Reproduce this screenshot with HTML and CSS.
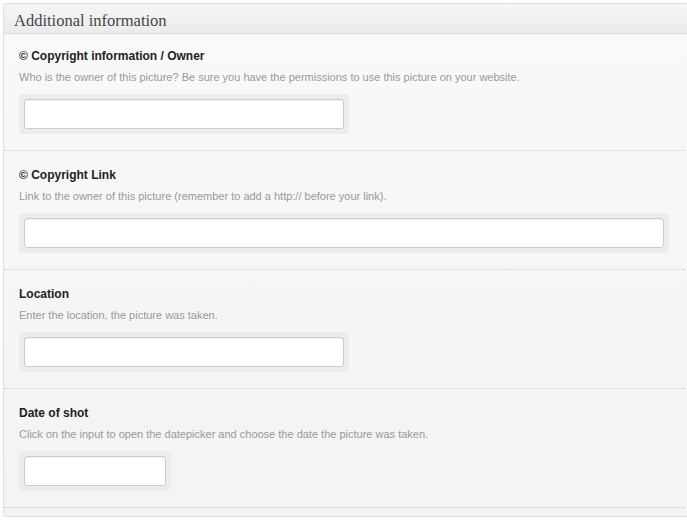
FILE: index.html
```html
<!DOCTYPE html>
<html>
<head>
<meta charset="utf-8">
<link rel="stylesheet" href="styles.css">
</head>
<body>
<div class="postbox">
  <h3 class="hndle">Additional information</h3>
  <div class="inside">
    <div class="field first">
      <label class="label">© Copyright information / Owner</label>
      <p class="desc">Who is the owner of this picture? Be sure you have the permissions to use this picture on your website.</p>
      <div class="wrap w-medium"><input class="input" type="text"></div>
    </div>
    <div class="field">
      <label class="label">© Copyright Link</label>
      <p class="desc">Link to the owner of this picture (remember to add a http:// before your link).</p>
      <div class="wrap w-large"><input class="input" type="text"></div>
    </div>
    <div class="field">
      <label class="label">Location</label>
      <p class="desc">Enter the location, the picture was taken.</p>
      <div class="wrap w-medium"><input class="input" type="text"></div>
    </div>
    <div class="field">
      <label class="label">Date of shot</label>
      <p class="desc">Click on the input to open the datepicker and choose the date the picture was taken.</p>
      <div class="wrap w-small"><input class="input" type="text"></div>
    </div>
  </div>
</div>
</body>
</html>
```
FILE: styles.css
```css
html, body {
  margin: 0;
  padding: 0;
  background: #ffffff;
  overflow: hidden;
}
body {
  padding: 3px 0 0 3px;
  font-family: "Liberation Sans", Arial, sans-serif;
}
.postbox {
  width: 700px;
  border: 1px solid #dfdfdf;
  border-radius: 3px;
  background: linear-gradient(to bottom, #f9f9f9, #f3f3f3);
  padding-bottom: 8px;
}
.hndle {
  margin: 0;
  height: 29px;
  line-height: 33px;
  padding: 0 0 0 10px;
  font-family: "Liberation Serif", Georgia, serif;
  font-weight: normal;
  font-size: 16.5px;
  color: #464646;
  background: linear-gradient(to bottom, #f6f6f6, #ebebeb);
  border-bottom: 1px solid #dcdcdc;
  border-radius: 3px 3px 0 0;
}
.field {
  padding: 17px 15px 16px 15px;
  border-bottom: 1px dotted #cfcfcf;
}
.field.first {
  padding-top: 15px;
}
.label {
  display: block;
  font-weight: bold;
  font-size: 12px;
  line-height: 15px;
  color: #222;
}
.desc {
  margin: 6px 0 0 0;
  font-size: 11px;
  line-height: 15px;
  color: #999;
}
.wrap {
  margin-top: 9px;
  padding: 5px;
  background: #ececec;
  border-radius: 4px;
}
.w-medium { width: 320px; }
.w-large { width: 640px; }
.w-small { width: 142px; }
.input {
  display: block;
  box-sizing: border-box;
  width: 100%;
  height: 30px;
  margin: 0;
  border: 1px solid #cccccc;
  border-radius: 3px;
  background: #ffffff;
  box-shadow: inset 0 1px 1px rgba(0,0,0,0.06);
  outline: none;
}
```
